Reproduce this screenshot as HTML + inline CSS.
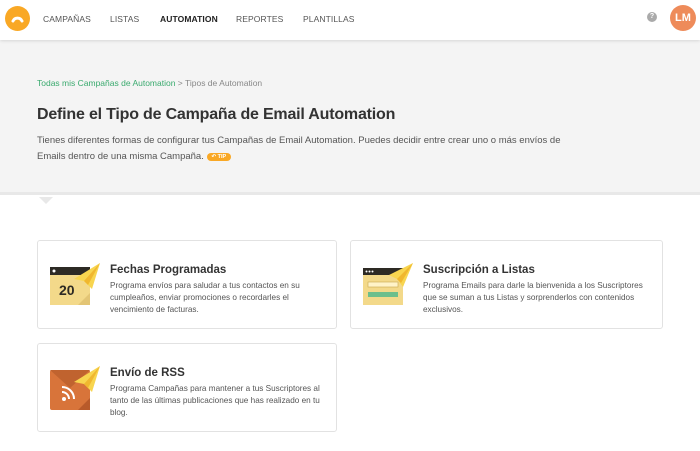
<!DOCTYPE html>
<html><head><meta charset="utf-8"><style>
*{margin:0;padding:0;box-sizing:border-box}
body{width:700px;height:451px;overflow:hidden;background:#fff;font-family:"Liberation Sans",Arial,sans-serif;position:relative}
.hdr{position:absolute;left:0;top:0;width:700px;height:40px;background:#fff;box-shadow:0 1px 3px rgba(0,0,0,.12);z-index:2}
.logo{position:absolute;left:5px;top:6px;width:25px;height:25px;border-radius:50%;background:#f9a825}
.nav{position:absolute;top:14px;font-size:8.5px;color:#555;letter-spacing:.1px}
.gray{position:absolute;left:0;top:40px;width:700px;height:155px;background:#f4f4f4;border-bottom:3px solid #e8e8e8}
.notch{position:absolute;left:39px;top:197px;width:0;height:0;border-left:7px solid transparent;border-right:7px solid transparent;border-top:7px solid #e8e8e8}
.bc{position:absolute;left:37px;top:78px;font-size:8.5px;color:#888}
.bc span{color:#3aaa6e}
h1{position:absolute;left:37px;top:106px;font-size:16px;color:#333;font-weight:bold;letter-spacing:-.2px}
.desc{position:absolute;left:37px;top:133px;font-size:9.5px;line-height:16px;color:#555;width:530px}
.tip{display:inline-block;background:#f9a825;color:#fff;font-size:5.5px;line-height:8px;height:8px;border-radius:4px;padding:0 5px;vertical-align:1px;font-weight:bold}
.card{position:absolute;border:1px solid #e2e2e2;border-radius:3px;background:#fff}
.card h3{position:absolute;left:72px;top:23px;font-size:11.5px;color:#333;font-weight:bold}
.card p{position:absolute;left:72px;top:39px;font-size:8.2px;line-height:12.2px;color:#555}
.card svg{position:absolute;left:12px;top:22px}
</style></head><body>
<div class="hdr">
<div class="logo"><svg width="25" height="25"><path d="M8 15 A5 5 0 0 1 17 15" stroke="#fff" stroke-width="3" fill="none" stroke-linecap="round"/></svg></div>
<div class="nav" style="left:43px">CAMPAÑAS</div>
<div class="nav" style="left:110px">LISTAS</div>
<div class="nav" style="left:160px;color:#222;font-weight:bold">AUTOMATION</div>
<div class="nav" style="left:236px">REPORTES</div>
<div class="nav" style="left:303px">PLANTILLAS</div>
<div style="position:absolute;left:647px;top:12px;width:10px;height:10px;border-radius:50%;background:#aaa;color:#fff;font-size:7px;text-align:center;line-height:10px;font-weight:bold">?</div>
<div style="position:absolute;left:670px;top:5px;width:26px;height:26px;border-radius:50%;background:#ee8b5a;color:#fff;font-size:11px;text-align:center;line-height:26px;font-weight:bold">LM</div>
</div>
<div class="gray"></div><div class="notch"></div>
<div class="bc"><span>Todas mis Campañas de Automation</span> &gt; Tipos de Automation</div>
<h1>Define el Tipo de Campaña de Email Automation</h1>
<div class="desc">Tienes diferentes formas de configurar tus Campañas de Email Automation. Puedes decidir entre crear uno o más envíos de Emails dentro de una misma Campaña. <span class="tip">↶ TIP</span></div>

<div class="card" style="left:37px;top:240px;width:300px;height:89px">
<svg width="52" height="46" viewBox="0 0 52 46"><rect x="0" y="4" width="40" height="38" fill="#f3d98a"/><rect x="0" y="4" width="40" height="8" fill="#2d2a24"/><circle cx="4" cy="8" r="1.5" fill="#fff"/><path d="M28 42 L40 30 L40 42 Z" fill="#e3c575"/><text x="9" y="32" font-size="14" font-weight="bold" fill="#2d2a24" font-family="Liberation Sans">20</text><path d="M24 16 L50 0 L42 26 L34 18 Z" fill="#f8d54f"/><path d="M34 18 L50 0 L38 22 Z" fill="#f0b72f"/></svg>
<h3>Fechas Programadas</h3>
<p>Programa envíos para saludar a tus contactos en su<br>cumpleaños, enviar promociones o recordarles el<br>vencimiento de facturas.</p></div>

<div class="card" style="left:350px;top:240px;width:313px;height:89px">
<svg width="52" height="46" viewBox="0 0 52 46"><rect x="0" y="5" width="40" height="37" fill="#f3d98a"/><rect x="0" y="5" width="40" height="7" fill="#2d2a24"/><circle cx="3.5" cy="8.5" r="1" fill="#fff"/><circle cx="6.5" cy="8.5" r="1" fill="#fff"/><circle cx="9.5" cy="8.5" r="1" fill="#fff"/><rect x="5" y="19" width="30" height="5" fill="#fff3c8" stroke="#c9a94e" stroke-width=".6"/><rect x="5" y="29" width="30" height="5" fill="#6dbf8c"/><path d="M26 12 L50 0 L40 24 L34 16 Z" fill="#f8d54f"/><path d="M34 16 L50 0 L38 20 Z" fill="#f0b72f"/></svg>
<h3>Suscripción a Listas</h3>
<p>Programa Emails para darle la bienvenida a los Suscriptores<br>que se suman a tus Listas y sorprenderlos con contenidos<br>exclusivos.</p></div>

<div class="card" style="left:37px;top:343px;width:300px;height:89px">
<svg width="52" height="46" viewBox="0 0 52 46"><rect x="0" y="4" width="40" height="40" rx="2" fill="#d8743a"/><path d="M0 4 L40 4 L20 22 Z" fill="#c0632f"/><path d="M28 44 L40 32 L40 44 Z" fill="#b85a2a"/><circle cx="14" cy="33" r="2" fill="#fff"/><path d="M12 26 A7 7 0 0 1 19 33" stroke="#fff" stroke-width="2" fill="none"/><path d="M12 21 A12 12 0 0 1 24 33" stroke="#fff" stroke-width="2" fill="none"/><path d="M24 16 L50 0 L42 26 L34 18 Z" fill="#f8d54f"/><path d="M34 18 L50 0 L38 22 Z" fill="#f0b72f"/></svg>
<h3>Envío de RSS</h3>
<p>Programa Campañas para mantener a tus Suscriptores al<br>tanto de las últimas publicaciones que has realizado en tu<br>blog.</p></div>
</body></html>
